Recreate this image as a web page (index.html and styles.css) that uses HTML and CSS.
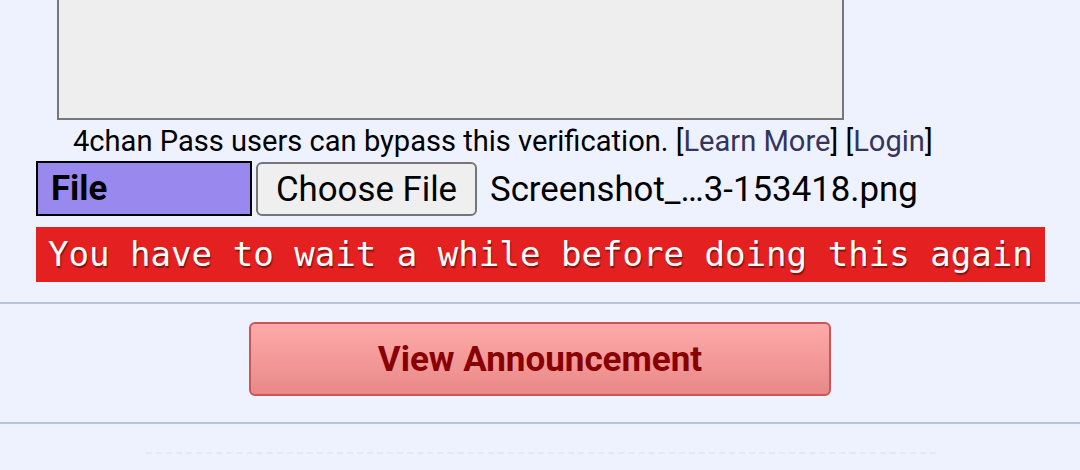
FILE: index.html
```html
<!DOCTYPE html>
<html lang="en">
<head>
  <meta charset="UTF-8" />
  <meta name="viewport" content="width=device-width, initial-scale=1.0" />
  <title>Post form</title>
  <link rel="stylesheet" href="styles.css">
</head>
<body>
  <div class="post-form">
    <div class="captcha-box"></div>
    <div class="pass-notice">
      4chan Pass users can bypass this verification. [<a href="#">Learn More</a>] [<a href="#">Login</a>]
    </div>
    <div class="file-row">
      <div class="field-label">File</div>
      <button class="choose-file">Choose File</button>
      <span class="file-name">Screenshot_…3-153418.png</span>
    </div>
    <div class="error-row">
      <span class="post-error">You have to wait a while before doing this again</span>
    </div>
  </div>
  <hr class="divider">
  <div class="announce-bar">
    <button class="announce-button">View Announcement</button>
  </div>
  <hr class="divider">
  <div class="dotted-line"></div>
</body>
</html>
```

FILE: styles.css
```css
* { box-sizing: border-box; }
body {
  margin: 0;
  background: #eef2ff;
  color: #000;
  font-family: Roboto, 'Liberation Sans', sans-serif;
}
.post-form {
  padding-left: 36px;
}
.captcha-box {
  margin-left: 21px;
  width: 787px;
  height: 122px;
  margin-top: -2px;
  background: #eeeeee;
  border: 2px solid #777;
}
.pass-notice {
  padding-left: 37px;
  font-size: 29.1px;
  line-height: 42px;
  height: 41px;
  white-space: nowrap;
}
.pass-notice a {
  color: #34345c;
  text-decoration: none;
}
.file-row {
  display: flex;
  align-items: center;
  gap: 4px;
  height: 55px;
}
.field-label {
  flex: none;
  width: 216px;
  height: 55px;
  background: #9988ee;
  border: 2px solid #000;
  font-weight: bold;
  font-size: 34.8px;
  line-height: 51px;
  padding-left: 13px;
}
.choose-file {
  flex: none;
  height: 54px;
  width: 221px;
  margin-top: 1px;
  font-family: inherit;
  font-size: 34.8px;
  color: #000;
  background: #efefef;
  border: 2px solid #767676;
  border-radius: 6px;
  padding: 0;
}
.file-name {
  font-size: 34.8px;
  padding-left: 9px;
  white-space: nowrap;
}
.error-row {
  margin-top: 11px;
  height: 55px;
}
.post-error {
  display: inline-block;
  vertical-align: top;
  background: #e52020;
  color: #fff;
  font-family: 'DejaVu Sans Mono', monospace;
  font-size: 34.1px;
  line-height: 55px;
  height: 55px;
  padding: 0 12px;
  text-shadow: 1px 2px 1px #8a1010;
  white-space: nowrap;
}
.divider {
  margin: 0;
  border: 0;
  border-top: 2px solid #b7c5d9;
}
.post-form + .divider {
  margin-top: 20px;
}
.announce-bar {
  display: flex;
  justify-content: center;
  padding: 18px 0 26px;
}
.announce-button {
  width: 582px;
  height: 74px;
  font-family: inherit;
  font-weight: bold;
  font-size: 35px;
  color: #880000;
  background: linear-gradient(#ffaaaa, #e88888);
  border: 2px solid #cc5555;
  border-radius: 6px;
}
.dotted-line {
  margin: 28px 0 0 146px;
  width: 790px;
  border-top: 2px dashed #e3e8f6;
}
```
